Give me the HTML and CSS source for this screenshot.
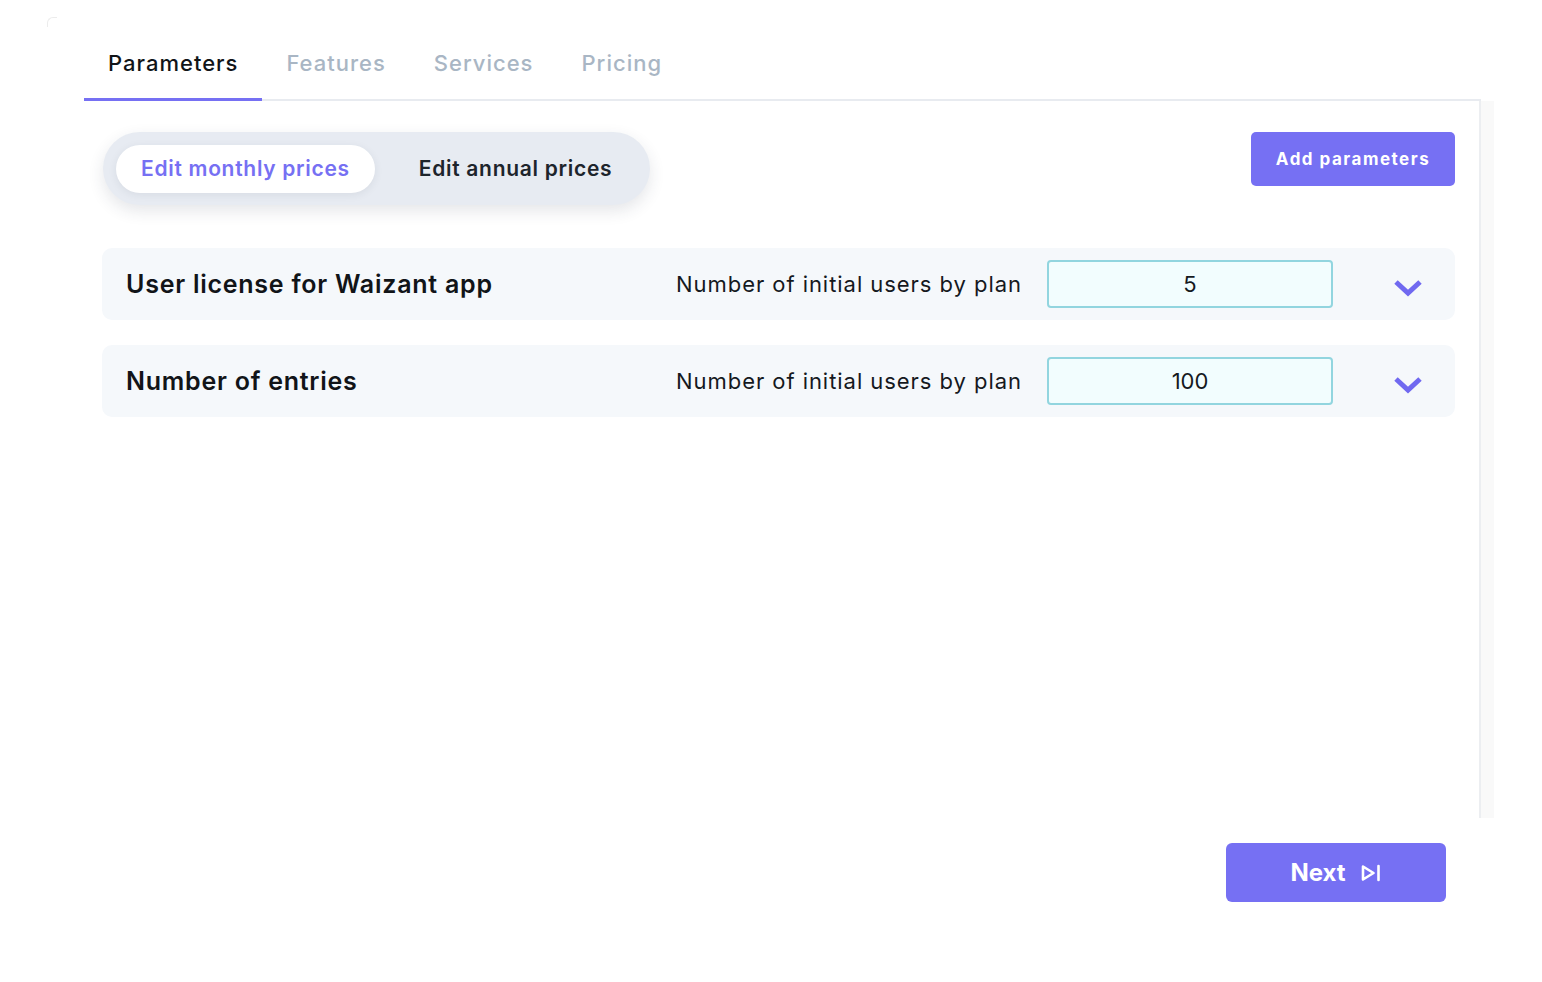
FILE: index.html
```html
<!DOCTYPE html>
<html lang="en">
<head>
<meta charset="utf-8">
<title>Parameters</title>
<link rel="stylesheet" href="styles.css">
</head>
<body>
<div class="corner"></div>
<div class="page">
  <div class="frame">
    <nav class="tabs">
      <div class="tab active">Parameters</div>
      <div class="tab">Features</div>
      <div class="tab">Services</div>
      <div class="tab">Pricing</div>
    </nav>
    <div class="card-wrap">
      <section class="card">
        <div class="toolbar">
          <div class="toggle">
            <button class="toggle-opt on">Edit monthly prices</button>
            <button class="toggle-opt">Edit annual prices</button>
          </div>
          <button class="btn-add">Add parameters</button>
        </div>
        <div class="rows">
          <div class="row">
            <div class="row-title">User license for Waizant app</div>
            <div class="row-label">Number of initial users by plan</div>
            <div class="row-input">5</div>
            <svg class="chev" width="30" height="20" viewBox="0 0 30 20"><path d="M3 4 L15 15 L27 4" fill="none" stroke="#7069f0" stroke-width="5" stroke-linecap="butt" stroke-linejoin="miter"/></svg>
          </div>
          <div class="row">
            <div class="row-title">Number of entries</div>
            <div class="row-label">Number of initial users by plan</div>
            <div class="row-input">100</div>
            <svg class="chev" width="30" height="20" viewBox="0 0 30 20"><path d="M3 4 L15 15 L27 4" fill="none" stroke="#7069f0" stroke-width="5" stroke-linecap="butt" stroke-linejoin="miter"/></svg>
          </div>
        </div>
      </section>
      <div class="track"></div>
    </div>
    <div class="footer">
      <button class="btn-next">Next
        <svg width="22" height="20" viewBox="0 0 22 20"><path d="M3 3.5 L13.5 10 L3 16.5 Z" fill="none" stroke="#fff" stroke-width="2.6" stroke-linejoin="round"/><path d="M18.5 3 V17" stroke="#fff" stroke-width="2.6" stroke-linecap="round"/></svg>
      </button>
    </div>
  </div>
</div>
</body>
</html>
```

FILE: styles.css
```css
* { box-sizing: border-box; }
html, body { margin: 0; padding: 0; background: #ffffff; }
body {
  font-family: Inter, "Noto Sans", "Liberation Sans", sans-serif;
  color: #111418;
  width: 1542px;
  height: 982px;
  overflow: hidden;
  position: relative;
}
.corner {
  position: absolute;
  left: 47px;
  top: 17px;
  width: 10px;
  height: 10px;
  border-top: 1px solid #ececec;
  border-left: 1px solid #ececec;
  border-top-left-radius: 6px;
}
.page { padding: 38px 0 0 84px; }
.frame { width: 1410px; }
.tabs {
  display: flex;
  width: 1397px;
  border-bottom: 2px solid #e8ebf0;
}
.tab {
  padding: 8px 24px 18px;
  font-size: 22px;
  font-weight: 500;
  letter-spacing: 1px;
  color: #a9b6c4;
  line-height: 34px;
  margin-bottom: -2px;
  border-bottom: 3px solid transparent;
}
.tab.active {
  color: #111418;
  border-bottom-color: #7670f3;
}
.card-wrap {
  display: flex;
  height: 717px;
}
.card {
  width: 1397px;
  border-right: 2px solid #eceef1;
  padding: 31px 24px 0 18px;
}
.track {
  width: 13px;
  background: #f9f9f9;
}
.toolbar {
  display: flex;
  justify-content: space-between;
  align-items: flex-start;
  padding-left: 1px;
}
.toggle {
  display: flex;
  align-items: center;
  height: 73px;
  padding: 0 13px;
  background: #e7ebf2;
  border-radius: 37px;
  box-shadow: 0 6px 16px rgba(40, 50, 70, 0.12);
  gap: 19px;
}
.toggle-opt {
  border: none;
  background: transparent;
  font-family: inherit;
  font-size: 21px;
  font-weight: 600;
  letter-spacing: 0.7px;
  color: #1d242c;
  height: 48px;
  padding: 0 25px;
  border-radius: 24px;
  cursor: pointer;
}
.toggle-opt.on {
  background: #ffffff;
  color: #7670f3;
  box-shadow: 0 2px 8px rgba(40, 50, 70, 0.08);
}
.btn-add {
  border: none;
  background: #7670f3;
  color: #ffffff;
  font-family: inherit;
  font-size: 17px;
  font-weight: 700;
  letter-spacing: 1.5px;
  height: 54px;
  width: 204px;
  border-radius: 5px;
  padding: 0;
}
.rows {
  margin-top: 43px;
  display: flex;
  flex-direction: column;
  gap: 25px;
}
.row {
  display: flex;
  align-items: center;
  height: 72px;
  background: #f5f8fb;
  border-radius: 10px;
  padding: 0 32px 0 24px;
}
.row-title {
  font-size: 25px;
  font-weight: 600;
  letter-spacing: 0.75px;
  width: 550px;
}
.row-label {
  font-size: 22px;
  font-weight: 400;
  letter-spacing: 0.95px;
  color: #15191e;
  width: 371px;
}
.row-input {
  width: 286px;
  height: 48px;
  border: 2px solid #92d5df;
  background: #f2fdfe;
  border-radius: 4px;
  display: flex;
  align-items: center;
  justify-content: center;
  font-size: 22px;
  color: #15191e;
}
.chev {
  margin-left: auto;
  margin-top: 8px;
}
.footer {
  display: flex;
  justify-content: flex-end;
  width: 1362px;
  padding-top: 25px;
}
.btn-next {
  border: none;
  background: #7670f3;
  color: #ffffff;
  font-family: inherit;
  font-size: 24px;
  font-weight: 700;
  width: 220px;
  height: 59px;
  border-radius: 6px;
  display: flex;
  align-items: center;
  justify-content: center;
  gap: 14px;
}
```
